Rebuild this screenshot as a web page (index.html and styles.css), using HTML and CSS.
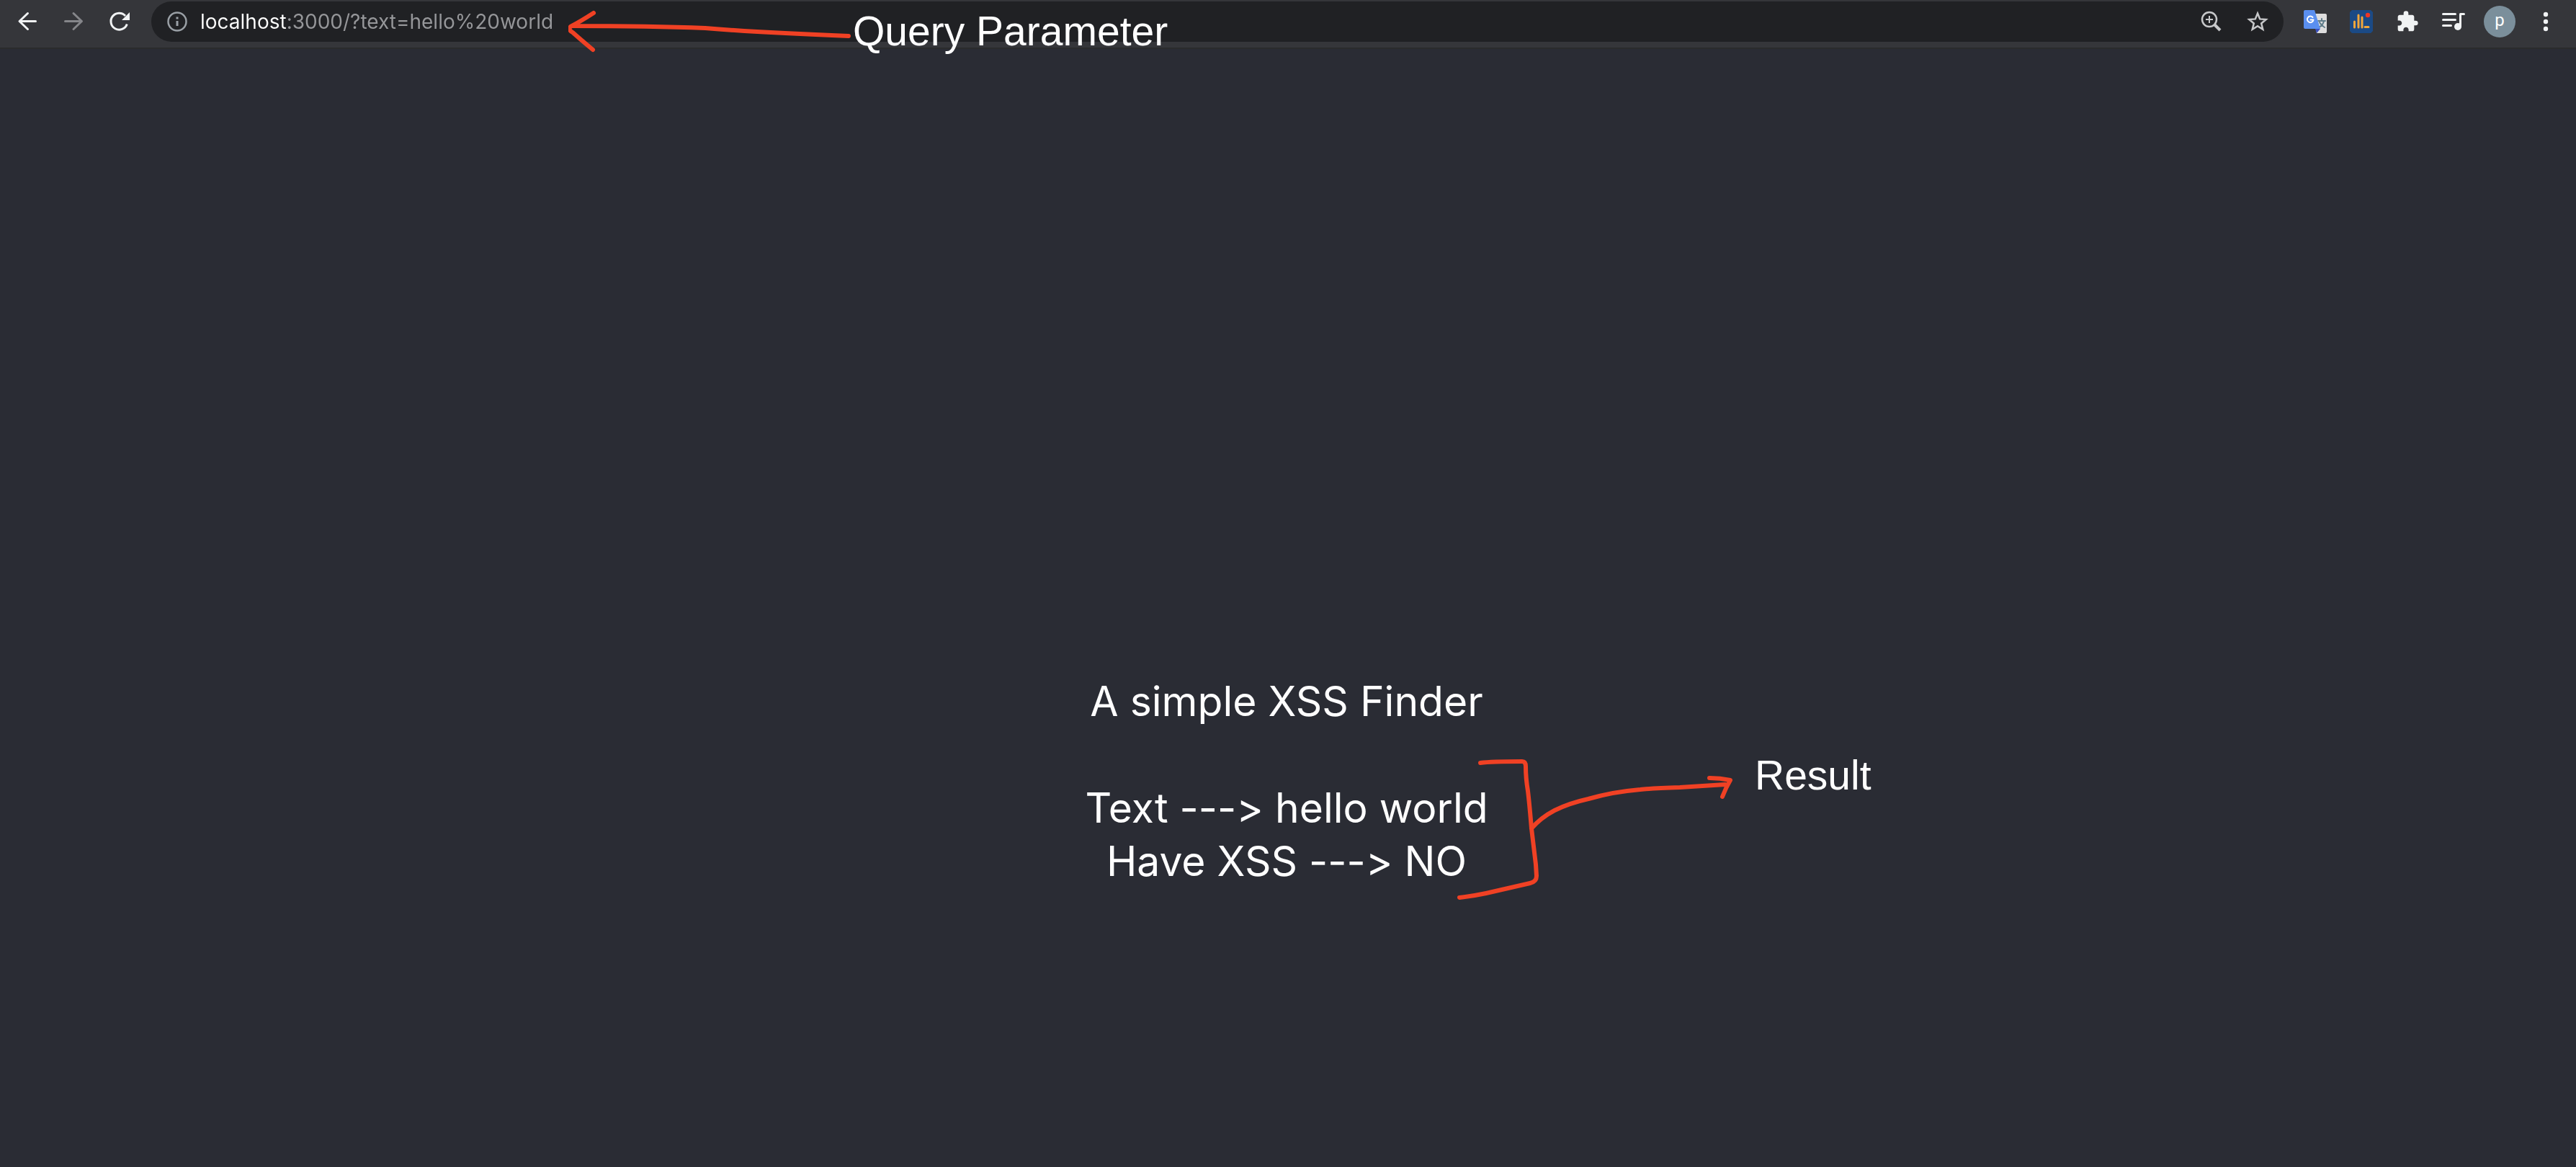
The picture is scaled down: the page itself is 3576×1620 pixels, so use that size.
FILE: index.html
```html
<!DOCTYPE html>
<html lang="en">
<head>
<meta charset="utf-8">
<title>XSS Finder</title>
<meta name="viewport" content="width=device-width, initial-scale=1">
<link rel="stylesheet" href="styles.css">
</head>
<body>
<header class="toolbar">
  <button class="tool" type="button" aria-label="Back">
    <svg class="icon light" viewBox="0 0 32 32"><path d="M27.500 15.500H5.500M16.500 4.500L5 15.500L16.500 26.500" stroke-width="3"/></svg>
  </button>
  <button class="tool" type="button" aria-label="Forward" disabled>
    <svg class="icon dim" viewBox="0 0 32 32"><path d="M4.500 15.500H26.500M16 4.500L27.500 15.500L16 26.500" stroke-width="3"/></svg>
  </button>
  <button class="tool" type="button" aria-label="Reload">
    <svg class="icon light" viewBox="0 0 32 32"><path d="M26.300 19.500A11.500 11.500 0 1 1 24 8" stroke-width="3" stroke-linecap="butt"/><path class="solid" d="M30 3V14H19Z"/></svg>
  </button>
  <form class="omnibox">
    <button class="tool" type="button" aria-label="Site information">
      <svg class="icon grey" viewBox="0 0 32 32"><circle cx="16" cy="16" r="12.500" stroke-width="2.500"/><path d="M16 15V22M16 9.500V12.500" stroke-width="3" stroke-linecap="butt"/></svg>
    </button>
    <input class="url" type="text" aria-label="Address" value="localhost:3000/?text=hello%20world">
    <button class="tool" type="button" aria-label="Zoom">
      <svg class="icon silver" viewBox="0 0 32 32"><circle cx="13" cy="13" r="10" stroke-width="2.500"/><path d="M13 8V18M8 13H18" stroke-width="2" stroke-linecap="butt"/><path d="M20 20L28 28" stroke-width="4" stroke-linecap="butt"/></svg>
    </button>
    <button class="tool" type="button" aria-label="Bookmark this page">
      <svg class="icon silver" viewBox="0 0 32 32"><path d="M16 4.500L19.200 12.400L27.700 13L21.200 18.500L23.300 26.800L16 22.300L8.700 26.800L10.800 18.500L4.300 13L12.800 12.400Z" stroke-width="2.500" stroke-linejoin="miter"/></svg>
    </button>
  </form>
  <nav class="extensions" aria-label="Extensions">
    <button class="tool" type="button" aria-label="Translate">
      <svg class="icon" viewBox="0 0 32 32"><path d="M12 5H30Q32 5 32 7V30Q32 32 30 32H18Z" fill="#dedede"/><path d="M20 15H30M25 12V15M28 15Q27 21 21 24M22 17Q24 21 29 24" fill="none" stroke="#607d8b" stroke-width="2"/><path d="M16 26H23L18 32Z" fill="#3a4fc0"/><path d="M2 0H15L23 26H2Q0 26 0 24V2Q0 0 2 0Z" fill="#5a8ff0"/><path d="M12.500 10A4.300 4.300 0 1 0 13.500 13.500H9.500" fill="none" stroke="#fff" stroke-width="2"/></svg>
    </button>
    <button class="tool" type="button" aria-label="Analytics">
      <svg class="icon" viewBox="0 0 32 32"><path d="M3 0H29L32 3V29L29 32H3L0 29V3Z" fill="#1b4a85"/><path d="M6.500 16V24M12 7V24M17 10V24M21 23.500H26" fill="none" stroke="#f2a63a" stroke-width="3" stroke-linecap="round"/><circle cx="25" cy="7" r="3.200" fill="#ee3524"/></svg>
    </button>
    <button class="tool" type="button" aria-label="Extensions">
      <svg class="icon light" viewBox="0 0 24 24"><path class="solid" d="M20.500 11H19V7c0-1.100-.9-2-2-2h-4V3.500a2.500 2.500 0 0 0-5 0V5H4c-1.100 0-2 .9-2 2v3.800h1.500c1.500 0 2.700 1.200 2.700 2.700S5 16.200 3.500 16.200H2V20c0 1.100.9 2 2 2h3.800v-1.500c0-1.500 1.200-2.700 2.700-2.700s2.700 1.200 2.700 2.700V22H17c1.100 0 2-.9 2-2v-4h1.500a2.500 2.500 0 0 0 0-5z"/></svg>
    </button>
    <button class="tool" type="button" aria-label="Media controls">
      <svg class="icon light" viewBox="0 0 32 32"><path d="M1.500 5.500H18.500M1.500 13.500H18.500M1.500 21.500H12.500M25.500 22V5.500H30.500" stroke-width="3"/><circle class="solid" cx="22" cy="23" r="5"/></svg>
    </button>
    <button class="tool avatar" type="button" aria-label="Profile">p</button>
    <button class="tool" type="button" aria-label="Menu">
      <svg class="icon light" viewBox="0 0 32 32"><g class="solid"><circle cx="16" cy="6" r="3.200"/><circle cx="16" cy="16" r="3.200"/><circle cx="16" cy="26" r="3.200"/></g></svg>
    </button>
  </nav>
  <div class="note note-query">
    <svg class="stroke query-arrow" viewBox="0 0 400 64"><path d="M35 7Q18 18 3 26Q-1 30 6 34Q16 43 34 58M6 25C90 25 140 26 190 28C250 33 310 36 389 39"/></svg>
    <span>Query Parameter</span>
  </div>
</header>
<main class="page">
  <section class="result">
    <h1 class="line">A simple XSS Finder</h1>
    <br>
    <p class="line">Text ---&gt; hello world</p>
    <p class="line">Have XSS ---&gt; NO</p>
    <div class="note note-result">
      <svg class="stroke result-arrow" viewBox="0 0 400 220"><path d="M35 21Q50 19 93 19Q98 19 98 26Q98 42 101 60Q103 76 106 112L112 162L113 178Q113 186 104 188L43 202Q24 206 6 208M106 112Q119 97 138 87Q158 77 185 71Q220 61 257 58Q275 56 312 55L375 51M353 42Q368 42 382 45Q376 55 371 68"/></svg>
      <span>Result</span>
    </div>
  </section>
</main>
</body>
</html>
```
FILE: styles.css
```css
* {
  box-sizing: border-box;
}

body {
  margin: 0;
  min-height: 100vh;
  display: flex;
  flex-direction: column;
  background: #2a2c34;
  color: #fff;
  font-family: Inter, "Liberation Sans", sans-serif;
}

.toolbar {
  position: relative;
  display: flex;
  align-items: center;
  gap: 8px;
  padding: 2px 14px 8px 10px;
  background: #35363a;
  border-bottom: 2px solid #2b2c2c;
}

.tool {
  flex: none;
  display: flex;
  align-items: center;
  justify-content: center;
  width: 56px;
  height: 56px;
  padding: 0;
  border: 0;
  border-radius: 50%;
  background: none;
  color: #fff;
}

.icon {
  width: 32px;
  height: 32px;
  fill: none;
  stroke-linecap: round;
  stroke-linejoin: round;
}

.light { color: #f1f3f4; stroke: currentColor; }
.dim { color: #85868a; stroke: currentColor; }
.grey { color: #9aa0a6; stroke: currentColor; }
.silver { color: #c7c8ca; stroke: currentColor; }
.solid { fill: currentColor; stroke: none; }

.omnibox {
  flex: 1;
  display: flex;
  align-items: center;
  gap: 8px;
  height: 56px;
  margin: 0 8px;
  padding: 0 8px;
  border-radius: 28px;
  background: #202124;
}

/* The host is bright, the rest of the address is dimmed. */
.url {
  flex: 1;
  min-width: 0;
  margin-left: -4px;
  padding: 0;
  border: 0;
  outline: 0;
  background: linear-gradient(90deg, #fff 122px, #96979a 122px) text;
  color: transparent;
  font-family: inherit;
  font-size: 28px;
  line-height: 36px;
}

.extensions {
  display: flex;
  gap: 8px;
}

.avatar {
  width: 44px;
  height: 44px;
  margin: 6px;
  padding-bottom: 4px;
  background: #7b8f9b;
  font-family: Roboto, sans-serif;
  font-size: 24px;
}

.page {
  flex: 1;
  display: flex;
  align-items: center;
  justify-content: center;
  padding: 30vh 4px 4px 0;
}

.result {
  position: relative;
  text-align: center;
  font-size: 57px;
  line-height: 74px;
  font-feature-settings: "calt" 0;
}

.line {
  margin: 0;
  font-size: inherit;
  font-weight: 400;
}

.note {
  position: absolute;
  font-family: "Liberation Sans", Arial, sans-serif;
  font-size: 57px;
  line-height: 64px;
  white-space: nowrap;
}

.note-query {
  top: 11px;
  left: 1184px;
}

.note-result {
  top: 107px;
  left: calc(50% + 650px);
}

.stroke {
  position: absolute;
  fill: none;
  stroke: #f04124;
  stroke-width: 6;
  stroke-linecap: round;
  stroke-linejoin: round;
}

.query-arrow {
  top: 0;
  left: -395px;
  width: 400px;
  height: 64px;
}

.result-arrow {
  top: -6px;
  left: -416px;
  width: 400px;
  height: 220px;
}
```
